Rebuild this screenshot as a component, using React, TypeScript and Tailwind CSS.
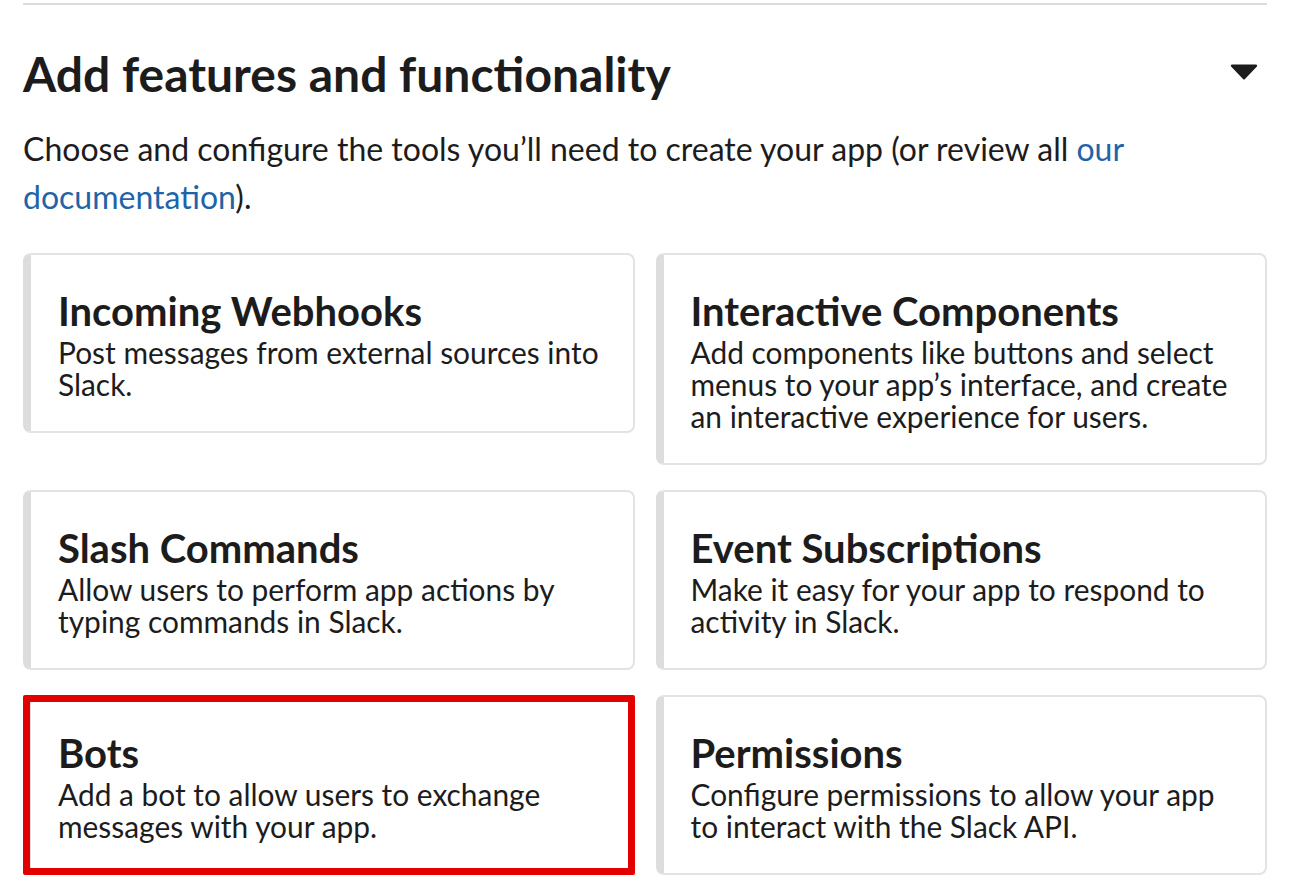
const features = [
  {
    title: "Incoming Webhooks",
    text: "Post messages from external sources into Slack.",
  },
  {
    title: "Interactive Components",
    text: "Add components like buttons and select menus to your app’s interface, and create an interactive experience for users.",
  },
  {
    title: "Slash Commands",
    text: "Allow users to perform app actions by typing commands in Slack.",
  },
  {
    title: "Event Subscriptions",
    text: "Make it easy for your app to respond to activity in Slack.",
  },
  {
    title: "Bots",
    text: "Add a bot to allow users to exchange messages with your app.",
    highlight: true,
  },
  {
    title: "Permissions",
    text: "Configure permissions to allow your app to interact with the Slack API.",
  },
];

function FeatureCard({
  title,
  text,
  highlight,
}: {
  title: string;
  text: string;
  highlight?: boolean;
}) {
  return (
    <div className="relative rounded-lg border-2 border-l-8 border-[#e3e3e3] border-l-[#dddddd] bg-white pl-[27px] pr-[28px] pt-[33px] pb-[31px]">
      <h3 className="text-[40px] font-bold leading-[46px] text-[#1d1c1d]">
        {title}
      </h3>
      <p className="mt-[2px] text-[29.9px] leading-[32px] text-[#1d1c1d]">
        {text}
      </p>
      {highlight && (
        <div className="pointer-events-none absolute -inset-[2px] -left-[8px] rounded-[2px] border-[7px] border-[#e30000]" />
      )}
    </div>
  );
}

export default function App() {
  return (
    <div className="min-h-screen bg-white pl-[23px] pr-[37px] pt-[3px] font-['Lato','Noto_Sans',sans-serif] text-[#1d1c1d]">
      <div className="border-t-2 border-[#dddddd]" />

      <div className="mt-[40px] flex items-center justify-between">
        <h2 className="text-[48px] font-bold leading-[58px]">
          Add features and functionality
        </h2>
        <svg
          width="28"
          height="18"
          viewBox="0 0 28 18"
          className="mr-[9px] -mt-[4px]"
        >
          <path
            d="M2 1.5h24a1.2 1.2 0 0 1 .9 2L15 16a1.4 1.4 0 0 1-2 0L1.1 3.5a1.2 1.2 0 0 1 .9-2z"
            fill="#1d1c1d"
          />
        </svg>
      </div>

      <p className="mt-[22px] text-[32px] leading-[48px]">
        Choose and configure the tools you’ll need to create your app (or
        review all{" "}
        <a href="#" className="text-[#1e64a8]">
          our documentation
        </a>
        ).
      </p>

      <div className="mt-[32px] grid grid-cols-2 items-start gap-x-[21px] gap-y-[25px]">
        {features.map((f) => (
          <FeatureCard key={f.title} {...f} />
        ))}
      </div>
    </div>
  );
}
